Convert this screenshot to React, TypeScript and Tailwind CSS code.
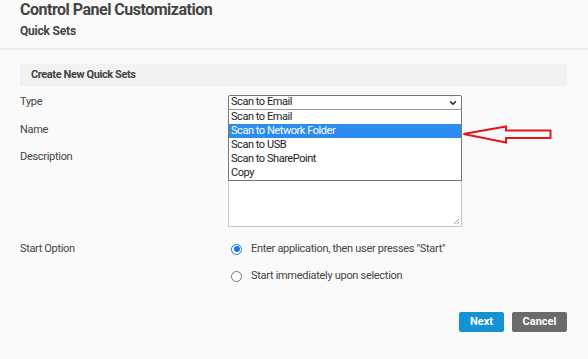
import { ChevronDown } from "lucide-react";

const options = [
  "Scan to Email",
  "Scan to Network Folder",
  "Scan to USB",
  "Scan to SharePoint",
  "Copy",
];

const Radio = ({ checked, label }: { checked?: boolean; label: string }) => (
  <div className="flex h-[16px] items-center gap-[9px]">
    <span
      className={`flex h-[11px] w-[11px] items-center justify-center rounded-full border bg-white ${checked ? "border-[#1a73e8]" : "border-[#777]"}`}
    >
      {checked && <span className="h-[6px] w-[6px] rounded-full bg-[#1a73e8]" />}
    </span>
    <span className="text-[11px] tracking-[-0.3px] text-[#444]">{label}</span>
  </div>
);

const App = () => {
  return (
    <div className="relative h-[359px] w-[588px] overflow-hidden bg-[#fafafa] font-['Roboto',sans-serif] text-[#444]">
      <div className="px-5">
        <h1 className="text-[16px] font-bold leading-[20px] tracking-[-0.5px] text-[#444]">
          Control Panel Customization
        </h1>
        <h2 className="mt-[3px] text-[12px] font-bold leading-[16px] tracking-[-0.2px] text-[#444]">
          Quick Sets
        </h2>
      </div>
      <div className="mt-[9px] h-[2px] bg-[#ececec]" />

      <div className="px-5">
        <div className="mt-[14px] flex h-[22px] w-[547px] items-center bg-[#f2f2f2] pl-[11px] text-[11px] font-bold tracking-[-0.4px]">
          Create New Quick Sets
        </div>

        <div className="mt-[9px] flex h-[15px] items-center">
          <span className="w-[208px] text-[11px] tracking-[-0.3px]">Type</span>
          <div className="flex h-[15px] w-[234px] items-center justify-between rounded-[2px] border border-[#777] bg-white pl-[2px] pr-[3px] text-[11px] tracking-[-0.45px] text-[#222]">
            Scan to Email
            <ChevronDown size={10} strokeWidth={3.5} />
          </div>
        </div>

        <div className="mt-[13px] flex h-[15px] items-center">
          <span className="w-[208px] text-[11px] tracking-[-0.3px]">Name</span>
          <div className="h-[15px] w-[234px] border border-[#c8c8c8] bg-white" />
        </div>

        <div className="mt-[12px] flex items-start">
          <span className="w-[208px] text-[11px] leading-[14px] tracking-[-0.3px]">
            Description
          </span>
          <div className="relative h-[77px] w-[234px] border border-[#c8c8c8] bg-white">
            <svg
              className="absolute bottom-[1px] right-[1px]"
              width="7"
              height="7"
              viewBox="0 0 7 7"
            >
              <path d="M6 1L1 6M6 4L4 6" stroke="#999" strokeWidth="1" />
            </svg>
          </div>
        </div>

        <div className="mt-[14px] flex items-start">
          <span className="flex h-[16px] w-[211px] items-center text-[11px] tracking-[-0.35px]">
            Start Option
          </span>
          <div className="flex flex-col gap-[11px]">
            <Radio checked label={'Enter application, then user presses "Start"'} />
            <Radio label="Start immediately upon selection" />
          </div>
        </div>

        <div className="mt-[28px] flex justify-end gap-[8px] pr-px">
          <button className="h-[20px] w-[45px] rounded-[2px] bg-[#1592d4] text-[11px] font-bold text-white">
            Next
          </button>
          <button className="h-[20px] w-[55px] rounded-[2px] bg-[#6b6b6b] text-[11px] font-bold text-white">
            Cancel
          </button>
        </div>
      </div>

      {/* open dropdown list */}
      <div className="absolute left-[228px] top-[109px] w-[234px] border border-[#777] border-t-[#999] bg-white text-[11px] leading-[14px] tracking-[-0.45px] text-[#222]">
        {options.map((o, i) => (
          <div
            key={o}
            className={`h-[14px] pl-[2px] ${i === 1 ? "bg-[#2c8cf0] text-white" : ""}`}
          >
            {o}
          </div>
        ))}
      </div>

      {/* red arrow */}
      <svg
        className="absolute left-[462px] top-[125px]"
        width="92"
        height="20"
        viewBox="0 0 92 20"
      >
        <path
          d="M1.5 9L44 1.5V5.5H88.5V13H44V17.5Z"
          fill="none"
          stroke="#e8141b"
          strokeWidth="2"
          strokeLinejoin="miter"
        />
      </svg>
    </div>
  );
};

export default App;
